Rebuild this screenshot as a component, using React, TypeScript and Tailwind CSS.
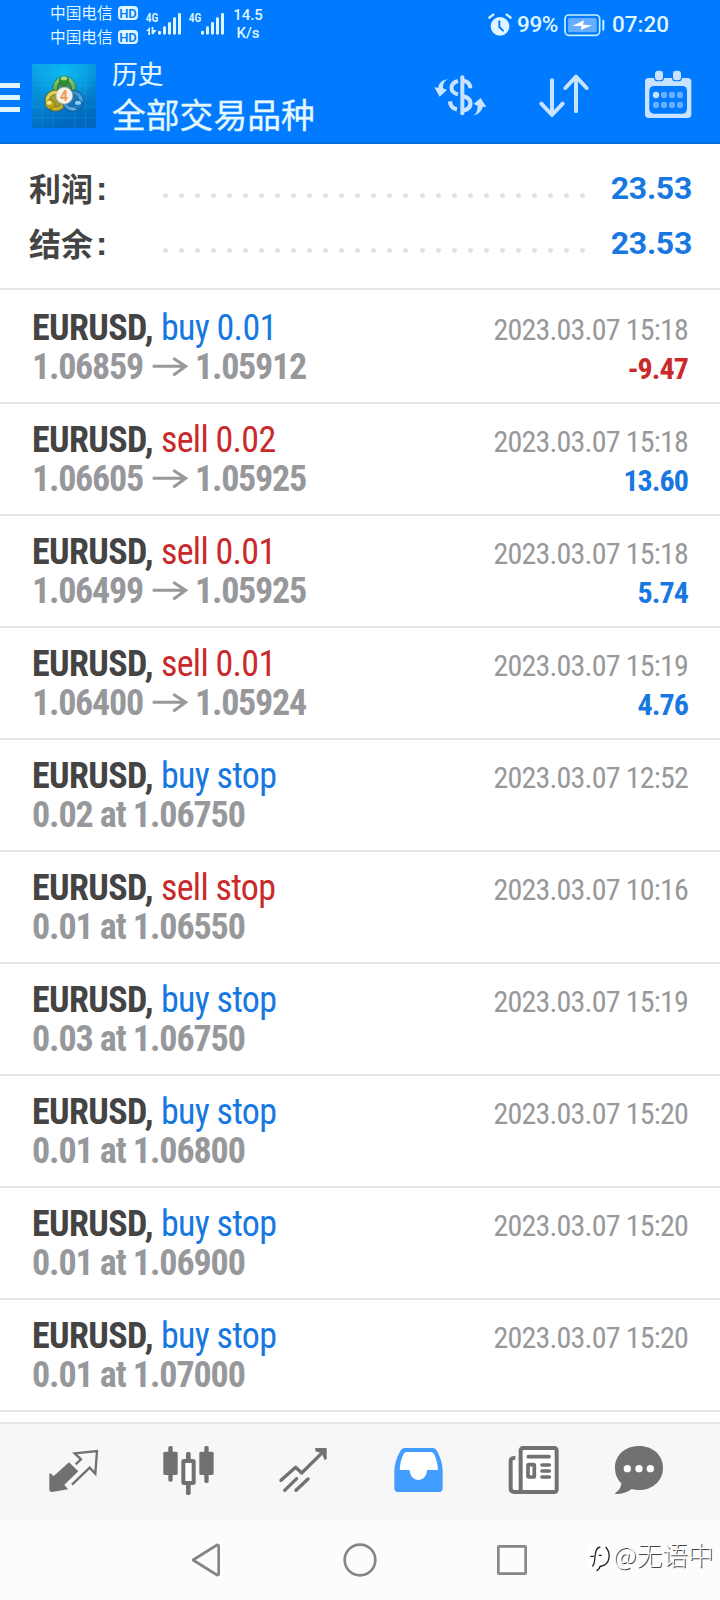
import React from "react";

type Deal = {
  side: "buy" | "sell";
  action: string;
  detail: string;
  to?: string;
  time: string;
  profit?: string;
};

const deals: Deal[] = [
  { side: "buy", action: "buy 0.01", detail: "1.06859", to: "1.05912", time: "2023.03.07 15:18", profit: "-9.47" },
  { side: "sell", action: "sell 0.02", detail: "1.06605", to: "1.05925", time: "2023.03.07 15:18", profit: "13.60" },
  { side: "sell", action: "sell 0.01", detail: "1.06499", to: "1.05925", time: "2023.03.07 15:18", profit: "5.74" },
  { side: "sell", action: "sell 0.01", detail: "1.06400", to: "1.05924", time: "2023.03.07 15:19", profit: "4.76" },
  { side: "buy", action: "buy stop", detail: "0.02 at 1.06750", time: "2023.03.07 12:52" },
  { side: "sell", action: "sell stop", detail: "0.01 at 1.06550", time: "2023.03.07 10:16" },
  { side: "buy", action: "buy stop", detail: "0.03 at 1.06750", time: "2023.03.07 15:19" },
  { side: "buy", action: "buy stop", detail: "0.01 at 1.06800", time: "2023.03.07 15:20" },
  { side: "buy", action: "buy stop", detail: "0.01 at 1.06900", time: "2023.03.07 15:20" },
  { side: "buy", action: "buy stop", detail: "0.01 at 1.07000", time: "2023.03.07 15:20" },
];

function HdBadge() {
  return (
    <span className="flex h-[14px] w-5 items-center justify-center rounded-[4px] bg-[#dff5ff] font-['Roboto'] text-[13px] leading-none font-semibold text-[#007bff]">
      HD
    </span>
  );
}

function Signal({ data }: { data?: boolean }) {
  return (
    <svg className="h-7 w-10 shrink-0" viewBox="435 30 120 84" fill="#dff5ff">
      <text x="437" y="67" fontFamily="Roboto Condensed, Roboto" fontSize="38" fontWeight="600" textLength="38" lengthAdjust="spacingAndGlyphs">
        4G
      </text>
      {data && <path d="M450 81v24h-5V93h-7zM455 81h5v9h10l-10 13h-5z" />}
      <rect x="474" y="92" width="9" height="12" rx="4" />
      <rect x="489" y="79" width="9" height="25" rx="4" />
      <rect x="504" y="66" width="9" height="38" rx="4" />
      <rect x="519" y="52" width="9" height="52" rx="4" />
      <rect x="534" y="39" width="9" height="65" rx="4" />
    </svg>
  );
}

function StatusBar() {
  return (
    <div className="flex h-[50px] items-start pl-[50px] text-[#dff5ff]">
      <div className="flex flex-col pt-[1px]">
        {[0, 1].map((n) => (
          <div key={n} className="flex h-6 items-center gap-[4px]">
            <span className="-mt-[1px] w-[64px] font-['Noto_Sans_CJK_SC',sans-serif] text-[15.7px] leading-6 whitespace-nowrap">中国电信</span>
            <HdBadge />
          </div>
        ))}
      </div>
      <div className="mt-[10px] ml-[7px] flex gap-[3px]">
        <Signal data />
        <Signal />
      </div>
      <div className="mt-[6px] ml-[3px] w-[34px] text-center font-['Roboto',sans-serif] text-[15px] leading-[18px] font-medium">
        14.5
        <br />
        K/s
      </div>
      <div className="mr-[50px] ml-auto flex h-[49px] items-center font-['Roboto',sans-serif] text-[22.5px] leading-none font-medium">
        <svg className="h-6 w-6" viewBox="263 36 72 72">
          <circle cx="299" cy="76" r="28" fill="#dff5ff" />
          <path d="M267 50l12-9M331 50l-12-9" stroke="#dff5ff" strokeWidth="7" strokeLinecap="round" />
          <path d="M297 61v17l11 11" fill="none" stroke="#007bff" strokeWidth="6" strokeLinecap="round" />
        </svg>
        <span className="ml-[5px] w-[43px] tracking-[-0.4px] whitespace-nowrap">99%</span>
        <svg className="ml-[4px] h-6 w-[42px]" viewBox="493 37 126 72">
          <rect x="496" y="43" width="104" height="61" rx="12" fill="none" stroke="#c4f2ff" strokeWidth="5" />
          <rect x="505" y="52" width="86" height="43" rx="5" fill="#66aeff" />
          <path d="M518 76l35-17-3 13 27 2-34 14 3-12z" fill="#fff" />
          <rect x="608" y="57" width="6" height="33" rx="3" fill="#c4f2ff" />
        </svg>
        <span className="ml-[6px] w-[58px] whitespace-nowrap">07:20</span>
      </div>
    </div>
  );
}

function AppLogo() {
  return (
    <svg className="h-16 w-16 shrink-0" viewBox="96 192 192 192">
      <defs>
        <linearGradient id="sky" x1="0" y1="0" x2="0.3" y2="1">
          <stop offset="0" stopColor="#0aa5ea" />
          <stop offset="0.5" stopColor="#058dd6" />
          <stop offset="1" stopColor="#0068bd" />
        </linearGradient>
        <radialGradient id="glow" cx="0.5" cy="0.15" r="0.5">
          <stop offset="0" stopColor="#0bb9ef" />
          <stop offset="1" stopColor="#0bb9ef" stopOpacity="0" />
        </radialGradient>
        <linearGradient id="green" x1="0" y1="0" x2="0" y2="1">
          <stop offset="0" stopColor="#8cc878" />
          <stop offset="1" stopColor="#3b9b33" />
        </linearGradient>
        <linearGradient id="gold" x1="0" y1="0" x2="1" y2="1">
          <stop offset="0" stopColor="#e2da5c" />
          <stop offset="1" stopColor="#b8a428" />
        </linearGradient>
        <linearGradient id="blue" x1="0" y1="0" x2="1" y2="1">
          <stop offset="0" stopColor="#1778c4" />
          <stop offset="1" stopColor="#6fc0ec" />
        </linearGradient>
      </defs>
      <rect x="96" y="192" width="192" height="192" fill="url(#sky)" />
      <rect x="96" y="192" width="192" height="192" fill="url(#glow)" />
      <path d="M127 192v192M160 192v192M225 192v192M257 192v192M96 225h192M96 257h192M96 321h192M96 353h192" stroke="#36b4ed" strokeOpacity="0.35" strokeWidth="2" />
      <circle cx="193" cy="264" r="28" fill="#3f8a5c" stroke="#20613a" strokeWidth="15" />
      <circle cx="193" cy="264" r="28" fill="none" stroke="url(#green)" strokeWidth="11" />
      <circle cx="167" cy="302" r="25" fill="#a59c3c" stroke="#695f18" strokeWidth="15" />
      <circle cx="167" cy="302" r="25" fill="none" stroke="url(#gold)" strokeWidth="11" />
      <circle cx="218" cy="302" r="25" fill="#1f78bb" stroke="#124e87" strokeWidth="15" />
      <circle cx="218" cy="302" r="25" fill="none" stroke="url(#blue)" strokeWidth="11" />
      <circle cx="192" cy="242" r="14" fill="#338f2c" stroke="#236630" strokeWidth="2" />
      <ellipse cx="192" cy="235" rx="10" ry="6" fill="#a7d88f" />
      <circle cx="151" cy="313" r="14" fill="#b9a51d" stroke="#756916" strokeWidth="2" />
      <ellipse cx="147" cy="308" rx="8" ry="6" fill="#f4ee8d" />
      <circle cx="234" cy="313" r="14" fill="#1c7ac2" stroke="#115590" strokeWidth="2" />
      <ellipse cx="234" cy="308" rx="9" ry="6" fill="#8bd0f3" />
      <circle cx="193" cy="287" r="25" fill="#f3f1ec" stroke="#b9b8a5" strokeWidth="2" />
      <text x="192" y="302" textAnchor="middle" fontFamily="Roboto" fontWeight="700" fontSize="42" fill="#ee9a50">
        4
      </text>
    </svg>
  );
}

function DollarIcon() {
  return (
    <svg className="h-11 w-14" viewBox="98 218 168 132" fill="none">
      <path d="M186 231v108" stroke="#c9e2ff" strokeWidth="12" strokeLinecap="round" />
      <path d="M190 241q20 4 20 23" stroke="#c9e2ff" strokeWidth="12" />
      <path d="M173 242c-26 7-26 34 0 40" stroke="#c9e2ff" strokeWidth="12" />
      <path d="M149 303q2 21 21 24" stroke="#c9e2ff" strokeWidth="13" />
      <path d="M190 288c27 5 27 36 0 42" stroke="#c9e2ff" strokeWidth="13" />
      <path d="M143 237c-13 6-15 16-15 27l12 5-22 20-16-28 12 1c2-15 12-23 29-25z" fill="#c9e2ff" />
      <path d="M218 345c13-6 13-17 14-29l-12-5 21-18 17 27-11-1c-3 14-13 24-29 26z" fill="#c9e2ff" />
    </svg>
  );
}

function SortIcon() {
  return (
    <svg className="h-12 w-[54px]" viewBox="411 215 162 144" fill="none" stroke="#c9e2ff" strokeWidth="12" strokeLinecap="round" strokeLinejoin="round">
      <path d="M456 240v104M424 310l32 34 32-34M528 333V229M496 263l32-34 32 34" />
    </svg>
  );
}

function CalendarIcon() {
  return (
    <svg className="h-[50px] w-[50px]" viewBox="729 207 150 150">
      <path d="M746 234h117q11 0 11 11v98q0 11-11 11H746q-11 0-11-11v-98q0-11 11-11z" fill="#c9e2ff" />
      <rect x="748" y="258" width="113" height="83" rx="14" fill="#007bff" />
      <rect x="762" y="209" width="30" height="35" rx="11" fill="#007bff" />
      <rect x="816" y="209" width="30" height="35" rx="11" fill="#007bff" />
      <rect x="765" y="212" width="24" height="29" rx="9" fill="#c9e2ff" />
      <rect x="819" y="212" width="24" height="29" rx="9" fill="#c9e2ff" />
      {[0, 1, 2, 3, 4, 5, 6, 7].map((n) => (
        <circle key={n} cx={768 + (n % 4) * 24} cy={n < 4 ? 285 : 315} r="9.5" fill={n === 0 ? "#c9e2ff" : "#66aeff"} />
      ))}
    </svg>
  );
}

function Header() {
  return (
    <header className="h-[144px] shrink-0 border-b-2 border-[#066ddc] bg-[#007bff]">
      <StatusBar />
      <div className="flex h-[92px] items-start">
        <div className="mt-[33px] flex w-5 flex-col gap-[7px]">
          <span className="h-[5px] bg-[#dff5ff]" />
          <span className="h-[5px] bg-[#dff5ff]" />
          <span className="h-[5px] bg-[#dff5ff]" />
        </div>
        <div className="mt-[14px] ml-3">
          <AppLogo />
        </div>
        <div className="ml-4 flex flex-col pt-[4px] font-['Noto_Sans_CJK_SC',sans-serif] whitespace-nowrap text-[#e6f8ff]">
          <span className="text-[25.7px] leading-[38px] [-webkit-text-stroke:0.2px_#e6f8ff]">历史</span>
          <span className="mt-px text-[33.800px] leading-[42px] [-webkit-text-stroke:0.3px_#e6f8ff]">全部交易品种</span>
        </div>
        <div className="mt-[23px] mr-[27px] ml-auto flex items-start">
          <DollarIcon />
          <div className="ml-[48px] -mt-px">
            <SortIcon />
          </div>
          <div className="-mt-[4px] ml-[52px]">
            <CalendarIcon />
          </div>
        </div>
      </div>
    </header>
  );
}

function SummaryRow({ label, value }: { label: string; value: string }) {
  return (
    <div className="flex h-[55px] items-center">
      <div className="-mt-[2px] flex w-[134px] items-center text-[#444]">
        <span className="font-['Noto_Sans_CJK_SC',sans-serif] text-[32px] leading-[55px] font-bold">{label}</span>
        <span className="ml-[3px] pt-[2px] font-['Liberation_Sans',sans-serif] text-[34px] leading-[55px] font-bold">:</span>
      </div>
      <div className="flex w-[422px] justify-between pt-[14px]">
        {Array.from({ length: 27 }, (_, n) => (
          <span key={n} className="size-[5px] rounded-full bg-[#e2e2e2]" />
        ))}
      </div>
      <span className="ml-auto font-['Roboto',sans-serif] text-[32px] leading-[55px] font-bold tracking-[-0.3px] text-[#1778e2]">{value}</span>
    </div>
  );
}

const condensed = "font-['Roboto_Condensed','Roboto',sans-serif]";

function DealRow({ deal, first }: { deal: Deal; first: boolean }) {
  return (
    <li
      className={`${first ? "h-[114px] pt-[18px]" : "h-[112px] pt-4"} flex shrink-0 justify-between border-b-2 border-[#e4e4e4] pr-8 pl-8 whitespace-nowrap ${condensed}`}
    >
      <div className="flex flex-col pt-px text-[36px] leading-[39px]">
        <div>
          <span className="font-bold tracking-[-0.6px] text-[#444]">EURUSD,</span>
          <span className={`ml-[8px] tracking-[-0.7px] ${deal.side === "buy" ? "text-[#1778e2]" : "text-[#c92a2a]"}`}>{deal.action}</span>
        </div>
        <div className="flex items-center font-bold text-[#97989b]">
          <span className={deal.to ? "w-[120px] tracking-[-1.25px]" : "tracking-[-1.1px]"}>{deal.detail}</span>
          {deal.to && (
            <>
              <svg className="mr-[7px] -mt-[4px] h-5 w-9" viewBox="456 630 108 60" fill="none" stroke="#97989b" strokeWidth="9">
                <path d="M458 661h96M520 637l37 24-37 27" />
              </svg>
              <span className="tracking-[-1.25px]">{deal.to}</span>
            </>
          )}
        </div>
      </div>
      <div className="flex flex-col items-end pt-[2px] text-[30px] leading-[39px]">
        <span className="tracking-[-0.8px] text-[#97989b]">{deal.time}</span>
        {deal.profit && (
          <span className={`font-bold tracking-[-0.95px] ${deal.profit.startsWith("-") ? "text-[#c92a2a]" : "text-[#1778e2]"}`}>{deal.profit}</span>
        )}
      </div>
    </li>
  );
}

function TabBar() {
  return (
    <nav className="flex h-24 shrink-0 items-center gap-[59px] bg-[#f7f7f7] pl-[46px]">
      <svg className="size-14 shrink-0" viewBox="138 132 168 168">
        <path d="M150 219l11 9 46-41 28 27-42 40 11 14-48 8q-8 0-8-8v-46z" fill="#717171" />
        <path d="M227 193l16-15-19-18 67-7-5 68-17-18-53 51" fill="none" stroke="#717171" strokeWidth="7" />
      </svg>
      <svg className="size-14 shrink-0" viewBox="483 132 168 168" fill="#717171">
        <rect x="505" y="138" width="13" height="107" rx="5" />
        <rect x="490" y="155" width="43" height="70" rx="5" />
        <rect x="613" y="138" width="13" height="111" rx="5" />
        <rect x="598" y="155" width="43" height="70" rx="5" />
        <rect x="558" y="156" width="14" height="25" rx="5" />
        <rect x="558" y="248" width="14" height="37" rx="5" />
        <rect x="550" y="183" width="31" height="66" rx="2" fill="#fff" stroke="#717171" strokeWidth="12" />
      </svg>
      <svg className="size-14 shrink-0" viewBox="828 132 168 168" fill="none" stroke="#717171" strokeWidth="10" strokeLinecap="round">
        <path d="M843 241l44-39 18 17 65-64" strokeLinejoin="round" />
        <path d="M946 144h34v33l-7 3-7-20-20-6z" fill="#717171" stroke="none" />
        <path d="M854 271l36-35M888 271l36-34" />
      </svg>
      <svg className="size-14 shrink-0" viewBox="153 132 168 168">
        <path d="M193 144h86q8 0 12 9 17 31 17 61v51q0 11-11 11H174q-11 0-11-11v-51q0-30 18-61 4-9 12-9z" fill="#439cff" />
        <path d="M199 156h74q6 0 9 5 9 18 12 45 0 4-4 4h-29c-1 40-51 40-52 0h-26q-4 0-4-4 3-27 12-45 3-5 8-5z" fill="#fff" />
      </svg>
      <svg className="size-14 shrink-0" viewBox="498 132 168 168" fill="none" stroke="#717171">
        <path d="M526 174q-14-1-14 8v83q0 11 11 11h23" fill="#fff" strokeWidth="12" />
        <rect x="542" y="144" width="108" height="132" rx="7" fill="#fff" strokeWidth="12" />
        <path d="M565 170h62M606 195h22M606 213h22M606 231h22" strokeWidth="11" strokeLinecap="round" />
        <rect x="564" y="194" width="19" height="37" rx="2" strokeWidth="11" />
      </svg>
      <svg className="-ml-[10px] size-14 shrink-0" viewBox="813 132 168 168">
        <path d="M897 138c41 0 72 27 72 65 0 39-31 67-72 67-8 0-15-1-22-3-13 10-29 15-46 15-4 0-5-2-2-4 10-7 16-15 17-28-12-12-19-28-19-47 0-38 31-65 72-65z" fill="#717171" />
        <circle cx="862" cy="206" r="11" fill="#fff" />
        <circle cx="897" cy="206" r="11" fill="#fff" />
        <circle cx="931" cy="206" r="11" fill="#fff" />
      </svg>
    </nav>
  );
}

function SystemNav() {
  return (
    <div className="flex h-20 shrink-0 items-center bg-[#fcfcfc] pl-[187px]">
      <svg className="size-10 shrink-0" viewBox="561 420 120 120" fill="none" stroke="#858585" strokeWidth="8" strokeLinejoin="round">
        <path d="M579 480l72-45q5-1 5 4v82q0 5-5 4z" />
      </svg>
      <svg className="ml-[113px] size-10 shrink-0" viewBox="0 420 120 120" fill="none" stroke="#858585" strokeWidth="8">
        <circle cx="60" cy="480" r="46" />
      </svg>
      <svg className="ml-[112px] size-10 shrink-0" viewBox="456 420 120 120" fill="none" stroke="#858585" strokeWidth="8">
        <rect x="475" y="439" width="82" height="82" rx="3" />
      </svg>
      <div className="-mt-[5px] ml-[53px] flex items-center">
        <svg className="h-[30px] w-[27px] shrink-0" viewBox="735 430 81 90" fill="none">
          <rect x="736" y="432" width="74" height="70" rx="20" fill="#fff" />
          <path d="M797 442c18 20 12 52-12 57q-7 1-7 7l-8 8" stroke="#222" strokeWidth="4" />
          <path d="M751 470h11M776 467h9" stroke="#222" strokeWidth="4" />
          <path d="M757 500c14-10 0-54 24-58" stroke="#222" strokeWidth="4" />
        </svg>
        <span className="-mt-[7px] ml-px font-['Noto_Sans_CJK_SC',sans-serif] text-[25.7px] leading-[40px] font-light whitespace-nowrap text-white [text-shadow:1px_1px_0_#444]">
          @无语中
        </span>
      </div>
    </div>
  );
}

export default function App() {
  return (
    <div className="flex h-[1600px] w-[720px] flex-col overflow-hidden bg-white">
      <Header />
      <section className="flex h-[146px] shrink-0 flex-col border-b-2 border-[#e4e4e4] pt-[17px] pr-[28px] pl-[29px]">
        <SummaryRow label="利润" value="23.53" />
        <SummaryRow label="结余" value="23.53" />
      </section>
      <ul className="flex h-[1134px] shrink-0 flex-col border-b-2 border-[#e4e4e4]">
        {deals.map((deal, n) => (
          <DealRow key={n} deal={deal} first={n === 0} />
        ))}
      </ul>
      <TabBar />
      <SystemNav />
    </div>
  );
}
